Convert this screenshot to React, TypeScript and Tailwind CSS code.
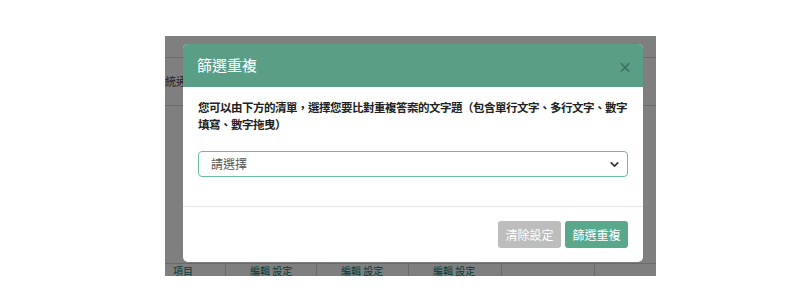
import { ChevronDown } from 'lucide-react';

const font = { fontFamily: '"Noto Sans CJK TC", "Noto Sans", sans-serif' };

export default function App() {
  return (
    <div className="w-[800px] h-[306px] bg-white overflow-hidden" style={font}>
      <div className="relative ml-[165px] mt-[36px] w-[491px] h-[240px] overflow-hidden bg-white">
        {/* page behind the backdrop */}
        <div className="flex flex-col h-full">
          <div className="h-[22px] border-b border-gray-300" />
          <div className="h-[48px] border-b border-gray-300 flex items-center text-[11px] text-gray-700">統通</div>
          <div className="flex-1" />
          <div className="h-[13px] border-t border-gray-300 flex text-[10px] leading-[10px] text-teal-700">
            <div className="w-[61px] border-r border-gray-300 pl-2 pt-[2px]">項目</div>
            <div className="w-[91px] border-r border-gray-300 pl-6 pt-[2px]">編輯 設定</div>
            <div className="w-[92px] border-r border-gray-300 pl-6 pt-[2px]">編輯 設定</div>
            <div className="w-[93px] border-r border-gray-300 pl-6 pt-[2px]">編輯 設定</div>
            <div className="w-[93px] border-r border-gray-300" />
            <div className="flex-1" />
          </div>
        </div>
        <div className="absolute inset-0 bg-black/50" />

        {/* modal */}
        <div className="absolute left-[18px] top-[8px] w-[460px] h-[218px] bg-white rounded-[5px] overflow-hidden flex flex-col">
          <div className="h-[43px] bg-[#5a9e86] flex items-center justify-between pl-[14px] pr-[11px]">
            <span className="text-white text-[15px]">篩選重複</span>
            <span className="text-[#2a5e4d] opacity-70 text-[14px] leading-none font-bold">×</span>
          </div>
          <div className="px-[15px] pt-[12px] pb-[29px] border-b border-gray-200">
            <p className="text-[11.5px] leading-[17px] font-bold text-[#222] tracking-[-0.5px]">
              您可以由下方的清單，選擇您要比對重複答案的文字題（包含單行文字、多行文字、數字填寫、數字拖曳）
            </p>
            <div className="mt-[18px] h-[26px] border border-[#6cbca3] rounded-[4px] flex items-center justify-between pl-[12px] pr-[6px]">
              <span className="text-[12px] text-[#555]">請選擇</span>
              <ChevronDown size={13} strokeWidth={3} className="text-[#333]" />
            </div>
          </div>
          <div className="flex-1 flex items-start justify-end gap-[4px] pt-[14px] pr-[15px]">
            <button className="w-[63px] h-[27px] rounded-[3px] bg-[#bdbdbd] text-white text-[12px]">清除設定</button>
            <button className="w-[63px] h-[27px] rounded-[3px] bg-[#5aa88b] text-white text-[12px]">篩選重複</button>
          </div>
        </div>
      </div>
    </div>
  );
}
